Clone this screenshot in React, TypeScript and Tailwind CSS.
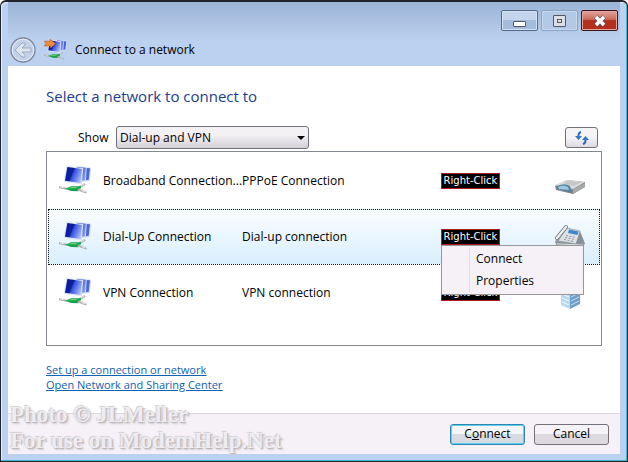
import type { ReactNode } from "react"

type Network = {
  name: string
  type: string
  device: ReactNode
  selected?: boolean
}

function ComputersIcon({ className, arrow = false }: { className: string; arrow?: boolean }) {
  return (
    <svg viewBox="12 22 96 96" className={className} aria-hidden="true">
      <defs>
        <linearGradient id="front" x1="0" y1="0.2" x2="1" y2="0.6">
          <stop offset="0" stopColor="#0a1a9c" />
          <stop offset="0.42" stopColor="#0f1f9e" />
          <stop offset="0.5" stopColor="#3450dc" />
          <stop offset="1" stopColor="#a9bcfb" />
        </linearGradient>
        <linearGradient id="back" x1="0" y1="0" x2="1" y2="0.8">
          <stop offset="0" stopColor="#1c2cae" />
          <stop offset="0.5" stopColor="#4f6ce6" />
          <stop offset="1" stopColor="#8ca4f2" />
        </linearGradient>
      </defs>
      <path d="M62 25 L109 30 L104 70 L68 74 Z" fill="#d3daea" />
      <path d="M66 28 L92 30 L90 68 L72 71 Z" fill="url(#back)" />
      <path d="M95 31 L105 32 L101 66 L93 68 Z" fill="#4a66dc" />
      <path d="M34 25 L85 31 L80 80 L26 72 Z" fill="#dce3f2" />
      <path d="M37 28 L81 34 L77 76 L30 69 Z" fill="url(#front)" />
      <path d="M14 89 L34 93 M74 88 L88 80 M70 96 L92 104" stroke="#a4aaa9" strokeWidth="6" strokeLinecap="round" fill="none" />
      <path d="M15 88 L28 91 M78 85 L87 80 M80 99 L91 103" stroke="#f2f4f4" strokeWidth="2.5" fill="none" />
      <path d="M31 93 L48 86 L78 86 L78 92 L67 95 L70 101 L48 100 Z" fill="#18a347" />
      <path d="M37 92 L50 88 L70 88 L60 92 Z" fill="#6bd888" />
      {arrow && (
        <path d="M13 31 L37 31 L37 23 L60 41 L40 60 L38 51 L13 51 L20 41 Z" fill="#f58a3c" stroke="#a85318" strokeWidth="2" />
      )}
    </svg>
  )
}

function ModemIcon() {
  return (
    <svg viewBox="0 -4 32 32" className="h-8 w-8" aria-hidden="true">
      <path d="M1 17 L13 11 L31 13 L31 18 L19 25 L2 21 Z" fill="#85878a" />
      <path d="M1 16 L13 11 L31 13 L19 20 Z" fill="#dcdddd" />
      <path d="M13 12 L28 13 L20 17 L9 15 Z" fill="#c4c6c7" />
      <path d="M2 18 Q9 13 16 17 L18 24 L4 20 Z" fill="#54809f" />
      <path d="M4 18 Q9 15 14 18 L15 21 L5 20 Z" fill="#9bc7df" />
      <path d="M19 20 L31 14 L31 18 L19 25 Z" fill="#a7a9aa" />
    </svg>
  )
}

function FaxIcon() {
  return (
    <svg viewBox="0 -3 32 32" className="h-8 w-8" aria-hidden="true">
      <path d="M1 17 L8 13 L28 15 L31 19 L29 24 L3 24 Z" fill="#8f959c" />
      <path d="M13 4 L26 7 L23 20 L4 17 Z" fill="#dde1e5" stroke="#8a9199" strokeWidth="0.7" />
      <path d="M26 7 L30 17 L24 22 L22 19 Z" fill="#868e96" />
      <path d="M15 5.5 L24.500 7.500 L23.500 11 L14 9 Z" fill="#3f84cf" />
      <path d="M12 11.500 L22 13.500 M11 13.500 L21 15.500 M10 15.500 L20 17.500" stroke="#8d959d" strokeWidth="1" strokeDasharray="2 1.500" />
      <path d="M12 3 L3 14" stroke="#70777f" strokeWidth="4" strokeLinecap="round" />
      <path d="M12 3 L3 14" stroke="#eceff2" strokeWidth="2.4" strokeLinecap="round" />
      <path d="M3 20 L29 21" stroke="#d9dde1" strokeWidth="1" />
    </svg>
  )
}

function ServerIcon() {
  return (
    <svg viewBox="0 -1 32 32" className="h-8 w-8" aria-hidden="true">
      <path d="M7 4 L18 1 L26 4 L16 8 Z" fill="#d6ecfa" />
      <path d="M7 4 L16 8 L16 31 L7 27 Z" fill="#b7d8ef" />
      <path d="M16 8 L26 4 L26 26 L16 31 Z" fill="#6f9fca" />
      <path d="M8 12 L15 15 M8 16 L15 19 M8 20 L15 23 M8 24 L15 27" stroke="#f0f9ff" strokeWidth="1" />
      <path d="M17 15 L25 11 M17 19 L25 15 M17 23 L25 19 M17 27 L25 23" stroke="#c4e0f3" strokeWidth="1" />
    </svg>
  )
}

const networks: Network[] = [
  { name: "Broadband Connection...", type: "PPPoE Connection", device: <ModemIcon /> },
  { name: "Dial-Up Connection", type: "Dial-up connection", device: <FaxIcon />, selected: true },
  { name: "VPN Connection", type: "VPN connection", device: <ServerIcon /> },
]

function ContextMenu() {
  return (
    <div
      role="menu"
      className="absolute top-full left-0 z-10 flex w-[143px] border border-[#979797] bg-[#f5f1f6] py-[2px]"
    >
      <div className="w-7 border-r border-[#e0dce2]" />
      <div className="flex flex-1 flex-col">
        <button role="menuitem" className="h-[22px] pl-[6px] text-left">
          Connect
        </button>
        <button role="menuitem" className="h-[22px] pl-[6px] text-left">
          Properties
        </button>
      </div>
    </div>
  )
}

function NetworkRow({ name, type, device, selected }: Network) {
  return (
    <li
      role="option"
      aria-selected={!!selected}
      className={
        selected
          ? "flex h-14 items-center border border-dotted border-[#101418] bg-linear-to-b from-[#fafdff] to-[#d9eefc] pr-[13px] pl-[10px]"
          : "flex h-14 items-center border border-transparent pr-[13px] pl-[10px]"
      }
    >
      <ComputersIcon className="mr-3 h-8 w-8 shrink-0" />
      <span className="w-[139px] shrink-0 whitespace-nowrap">{name}</span>
      <span className="flex-1">{type}</span>
      <div className="relative mr-[54px]">
        <span className="block h-4 w-[59px] border border-[#b01c24] bg-black text-center font-['DejaVu_Sans'] text-[10px] leading-[14px] whitespace-nowrap text-white">
          Right-Click
        </span>
        {selected && <ContextMenu />}
      </div>
      {device}
    </li>
  )
}

function TitleBar() {
  return (
    <header className="bg-linear-to-b from-[#9bb4d6] to-[#bcd1ef] to-60%">
      <div className="flex h-8 justify-end gap-[3px] pt-2 pr-[2px]">
        <button aria-label="Minimize" className="flex h-[21px] w-[37px] items-end justify-center rounded-[2px] border border-[#53698c] bg-linear-to-b from-[#c3d4ec] from-50% to-[#a5bddd] to-50% pb-[3px] shadow-[inset_0_0_0_1px_#d5e2f4]">
          <span className="h-[6px] w-[13px] rounded-[1px] border border-[#535666] bg-white" />
        </button>
        <button aria-label="Maximize" disabled className="flex h-[21px] w-[37px] items-center justify-center rounded-[2px] border border-[#8ba3c6] bg-[#b4c9e7] shadow-[inset_0_0_0_1px_#c7d8ef]">
          <span className="flex h-3 w-[13px] items-center justify-center rounded-[1px] border border-[#535666] bg-[#dcdfe5]">
            <span className="h-1 w-[5px] border border-[#535666]" />
          </span>
        </button>
        <button aria-label="Close" className="flex h-[21px] w-[37px] items-center justify-center rounded-[2px] border border-[#43141a] bg-linear-to-b from-[#dc9a90] from-10% via-[#c8675b] via-45% to-[#b5301c] to-50% shadow-[inset_0_0_0_1px_#e3a79f]">
          <svg viewBox="0 0 14 12" className="h-3 w-[14px]" aria-hidden="true">
            <path d="M3 2 L11 10 M11 2 L3 10" stroke="#535666" strokeWidth="5" />
            <path d="M3 2 L11 10 M11 2 L3 10" stroke="#fff" strokeWidth="3.4" />
          </svg>
        </button>
      </div>
      <div className="flex h-8 items-center gap-2 pl-[2px]">
        <button aria-label="Back" disabled className="h-[26px] w-[26px]">
          <svg viewBox="0 0 26 26" aria-hidden="true">
            <circle cx="13" cy="13" r="12" fill="#c3d1e8" stroke="#7b8798" strokeWidth="1.4" />
            <circle cx="13" cy="13" r="10.8" fill="none" stroke="#e6edf8" />
            <path d="M5 13 L12 6 L15 6 L15 8 L12 11 L21 11 L21 15 L12 15 L15 18 L15 20 L12 20 Z" fill="#dce4f1" stroke="#98a6bb" strokeWidth="0.9" />
          </svg>
        </button>
        <ComputersIcon arrow className="h-[23px] w-[23px]" />
        <h1>Connect to a network</h1>
      </div>
    </header>
  )
}

export default function App() {
  return (
    <div className="relative flex min-h-screen flex-col rounded-t-[6px] border border-t-2 border-[#20242c] bg-[#bcd1ef] px-[7px] pb-[7px] font-['Open_Sans','Noto_Sans',sans-serif] text-[12px] leading-4 text-black shadow-[inset_-1px_-1px_0_#3fb6cf,inset_1px_1px_0_#e4eefa]">
      <TitleBar />

      <main className="flex-1 bg-white pt-[18px] pr-[18px] pl-[38px]">
        <h2 className="text-[15px] leading-6 text-[#1c3d8c]">Select a network to connect to</h2>

        <div className="mt-[18px] flex items-center pr-1 pl-8">
          <label htmlFor="show" className="w-[38px]">
            Show
          </label>
          <div className="relative">
            <select
              id="show"
              defaultValue="vpn"
              className="block h-[23px] w-[193px] appearance-none rounded-[3px] border border-[#74707a] bg-linear-to-b from-[#f3f1f4] from-40% to-[#d3d0d6] pl-[3px]"
            >
              <option value="vpn">Dial-up and VPN</option>
              <option value="all">All</option>
              <option value="wireless">Wireless</option>
            </select>
            <svg viewBox="0 0 8 4" className="pointer-events-none absolute top-[10px] right-1 h-1 w-2" aria-hidden="true">
              <path d="M0 0 H8 L4 4 Z" />
            </svg>
          </div>
          <button aria-label="Refresh" className="ml-auto flex h-[21px] w-[33px] items-center justify-center rounded-[3px] border border-[#74707a] bg-linear-to-b from-[#f5f3f6] from-50% to-[#dcd9df]">
            <svg viewBox="0 0 16 14" className="h-[14px] w-4" aria-hidden="true">
              <path d="M7 1 Q4 2 4.500 6 M9 13 Q12 12 11.500 8" fill="none" stroke="#2a6bb8" strokeWidth="2" />
              <path d="M1 5 H8 L4.500 9 Z M8 9 H15 L11.500 5 Z" fill="#2f77c6" />
            </svg>
          </button>
        </div>

        <ul role="listbox" aria-label="Networks" className="mt-[2px] h-[195px] border border-[#828790] p-px">
          {networks.map((n) => (
            <NetworkRow key={n.name} {...n} />
          ))}
        </ul>

        <nav className="mt-4 flex flex-col items-start text-[11px] leading-[15px] text-[#0f62b4] underline">
          <a href="#setup">Set up a connection or network</a>
          <a href="#sharing">Open Network and Sharing Center</a>
        </nav>
      </main>

      <footer className="flex h-[41px] items-center justify-end gap-[9px] border-t border-[#dcd8de] bg-[#f5f1f6] pr-[11px]">
        <button className="h-[21px] w-[75px] rounded-[3px] border border-[#2f86ae] bg-linear-to-b from-[#f3f5f8] from-50% to-[#d6dbe3] to-50% leading-none shadow-[inset_0_0_0_1px_#5fd0f2]">
          C<u>o</u>nnect
        </button>
        <button className="h-[21px] w-[75px] rounded-[3px] border border-[#74707a] bg-linear-to-b from-[#f5f3f6] from-50% to-[#dcd9df] to-50% leading-none">
          Cancel
        </button>
      </footer>

      <p className="pointer-events-none absolute bottom-[7px] left-[9px] font-['Liberation_Serif'] text-[23px] leading-[26px] font-bold text-[#efecf0] [text-shadow:1px_1px_1px_#b8b4ba,-1px_-1px_1px_#d2ced4,2px_2px_2px_#d2ced4]">
        Photo © JLMeller
        <br />
        For use on ModemHelp.Net
      </p>
    </div>
  )
}
